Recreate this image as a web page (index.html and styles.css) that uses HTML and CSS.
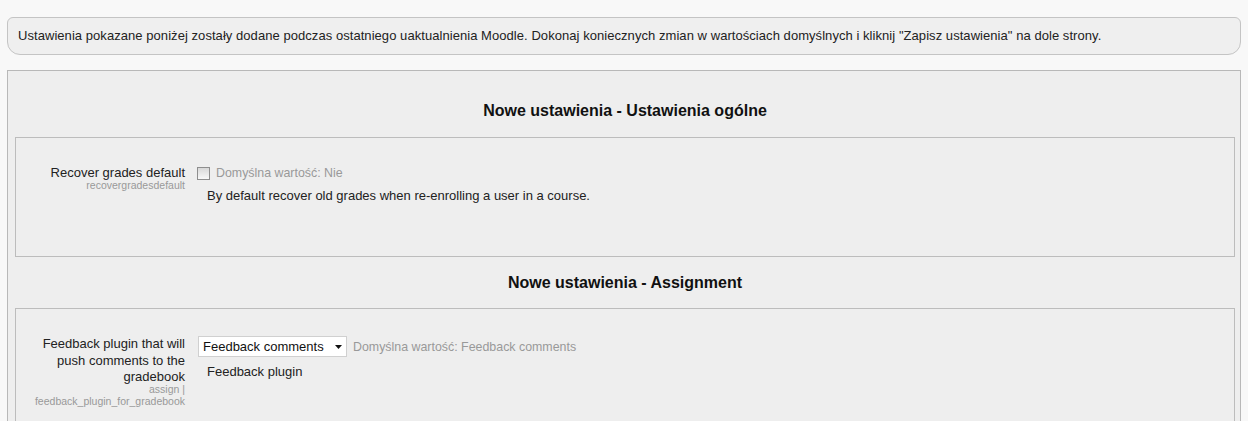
FILE: index.html
```html
<!DOCTYPE html>
<html lang="pl">
<head>
<meta charset="utf-8">
<title>Nowe ustawienia</title>
<link rel="stylesheet" href="styles.css">
</head>
<body>
<div class="notice">Ustawienia pokazane poniżej zostały dodane podczas ostatniego uaktualnienia Moodle. Dokonaj koniecznych zmian w wartościach domyślnych i kliknij "Zapisz ustawienia" na dole strony.</div>
<form class="settings">
  <h3 class="heading first">Nowe ustawienia - Ustawienia ogólne</h3>
  <div class="group">
    <div class="row">
      <div class="label">
        <div class="title">Recover grades default</div>
        <div class="name">recovergradesdefault</div>
      </div>
      <div class="field">
        <div class="control">
          <input type="checkbox" class="check">
          <span class="default">Domyślna wartość: Nie</span>
        </div>
        <div class="desc">By default recover old grades when re-enrolling a user in a course.</div>
      </div>
    </div>
  </div>
  <h3 class="heading">Nowe ustawienia - Assignment</h3>
  <div class="group">
    <div class="row">
      <div class="label">
        <div class="title">Feedback plugin that will push comments to the gradebook</div>
        <div class="name">assign |<br>feedback_plugin_for_gradebook</div>
      </div>
      <div class="field">
        <div class="control">
          <div class="select"><span>Feedback comments</span><svg width="7" height="4" viewBox="0 0 7 4"><path d="M0 0H7L3.5 4Z" fill="#111"/></svg></div>
          <span class="default">Domyślna wartość: Feedback comments</span>
        </div>
        <div class="desc">Feedback plugin</div>
      </div>
    </div>
  </div>
</form>
</body>
</html>
```

FILE: styles.css
```css
html, body {
  margin: 0;
  padding: 0;
}
body {
  background: #f8f8f8;
  font-family: "Liberation Sans", Arial, sans-serif;
  font-size: 13px;
  color: #222;
}
.notice {
  margin: 17px 7px 0 7px;
  height: 36px;
  line-height: 36px;
  padding: 0 10px;
  background: #efefef;
  border: 1px solid #c4c4c4;
  border-radius: 6px 6px 13px 13px;
  white-space: nowrap;
  letter-spacing: 0.055px;
}
.settings {
  margin: 15px 7px 0 7px;
  padding: 0 5px 40px 7px;
  background: #eeeeee;
  border: 1px solid #b8b8b8;
  border-bottom: none;
}
.heading {
  margin: 0;
  padding: 16px 0 15px 0;
  line-height: 20px;
  font-size: 16px;
  font-weight: bold;
  text-align: center;
  color: #111;
}
.heading.first {
  padding-top: 30px;
  padding-bottom: 16px;
}
.group {
  border: 1px solid #bcbcbc;
  padding: 27px 0 52px 0;
}
.row {
  display: grid;
  grid-template-columns: 169px 1fr;
  column-gap: 12px;
}
.label {
  padding-left: 13px;
  text-align: right;
}
.title {
  line-height: 16.5px;
  color: #222;
}
.name {
  margin-top: -3px;
  font-size: 10.5px;
  line-height: 12px;
  color: #999;
}
.field {
  display: flex;
  flex-direction: column;
}
.control {
  display: flex;
  align-items: center;
  gap: 6px;
  min-height: 16px;
}
.check {
  appearance: none;
  -webkit-appearance: none;
  width: 13px;
  height: 13px;
  margin: 0;
  border: 1px solid #8e8e8e;
  background: linear-gradient(#d8d8d8, #f8f8f8);
  box-sizing: border-box;
}
.default {
  color: #999;
  font-size: 12.4px;
  line-height: 16px;
}
.select {
  display: flex;
  align-items: center;
  justify-content: space-between;
  box-sizing: border-box;
  width: 149px;
  height: 21px;
  margin-left: 1px;
  padding: 0 4px 0 4px;
  background: #fff;
  border: 1px solid #d0d0d0;
  color: #111;
}
.desc {
  margin-top: 7px;
  padding-left: 10px;
  line-height: 16px;
  color: #222;
}
```
